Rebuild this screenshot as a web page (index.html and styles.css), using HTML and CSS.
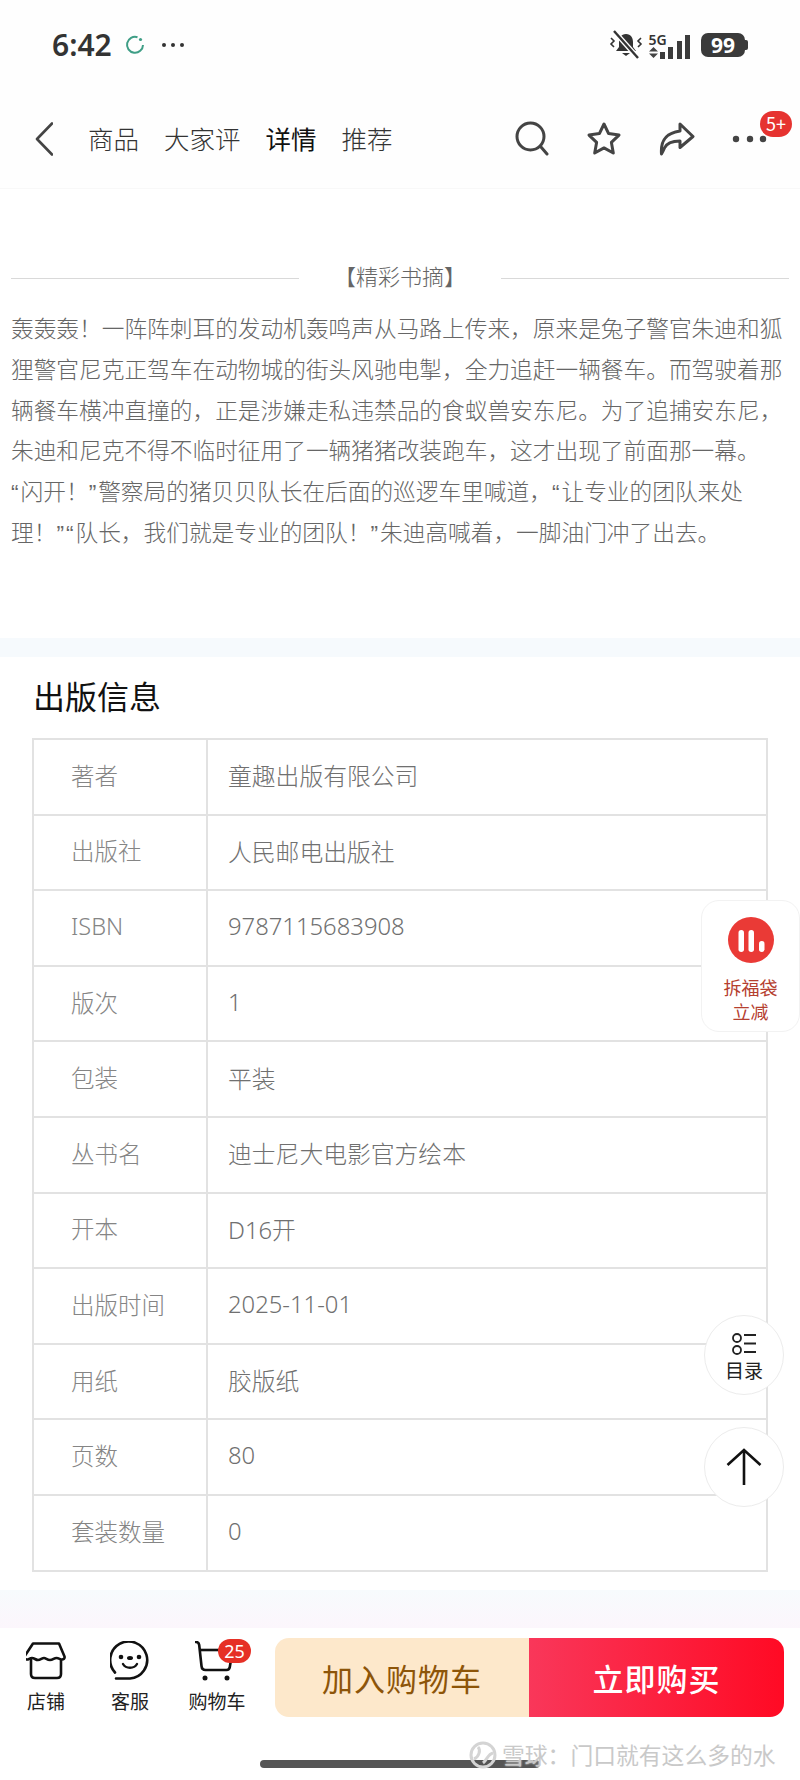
FILE: index.html
```html
<!DOCTYPE html>
<html lang="zh-CN">
<head>
    <meta charset="UTF-8">
    <title>出版信息</title>
    <link rel="stylesheet" href="styles.css">
</head>
<body>
    <div class="phone">
        <!-- Status bar -->
        <div class="status">
            <div class="status-left">
                <span class="time">6:42</span>
                <svg class="sync" width="20" height="20" viewBox="0 0 20 20"><path d="M12.5 2.2A8 8 0 1 0 18 10" fill="none" stroke="#3f9e86" stroke-width="2"/><circle cx="15.5" cy="4.5" r="1.6" fill="#3f9e86"/></svg>
                <svg class="more" width="24" height="6" viewBox="0 0 24 6"><circle cx="3" cy="3" r="2" fill="#333"/><circle cx="12" cy="3" r="2" fill="#333"/><circle cx="21" cy="3" r="2" fill="#333"/></svg>
            </div>
            <div class="status-right">
                <svg width="34" height="30" viewBox="0 0 34 30"><path d="M17 4c-5 0-7 4-7 8v5l-3 4h20l-3-4v-5c0-4-2-8-7-8z" fill="#333"/><path d="M13 23h8l-4 3z" fill="#333"/><path d="M5 1l24 27" stroke="#fff" stroke-width="5"/><path d="M5 1l24 27" stroke="#333" stroke-width="2.4"/><path d="M2 8l3 3-3 3 3 3M32 8l-3 3 3 3-3 3" fill="none" stroke="#333" stroke-width="1.6"/></svg>
                <div class="net">
                    <span class="net-label">5G</span>
                    <svg width="9" height="11" viewBox="0 0 9 11"><path d="M4.500 0L9 4.500H0zM4.500 11L0 6.500h9z" fill="#444"/></svg>
                </div>
                <div class="bars">
                    <i class="bar-1"></i><i class="bar-2"></i><i class="bar-3"></i><i class="bar-4"></i>
                </div>
                <div class="battery"><span>99</span></div>
            </div>
        </div>

        <!-- Top nav -->
        <nav class="topnav">
            <svg class="back" width="18" height="34" viewBox="0 0 18 34"><path d="M17 1.500L2 17l15 15.500" fill="none" stroke="#444" stroke-width="2.600" stroke-linecap="round" stroke-linejoin="round"/></svg>
            <div class="tabs">
                <a>商品</a>
                <a>大家评</a>
                <a class="active">详情</a>
                <a>推荐</a>
            </div>
            <div class="actions">
                <svg width="34" height="36" viewBox="0 0 34 36"><circle cx="15.500" cy="15.500" r="13.500" fill="none" stroke="#444" stroke-width="3"/><path d="M26 26l6 7" stroke="#444" stroke-width="3" stroke-linecap="round"/></svg>
                <svg width="36" height="36" viewBox="0 0 36 36"><path d="M18 3l4.600 9.600 10.400 1.500-7.600 7.300 1.900 10.600-9.300-5.100-9.300 5.100 1.900-10.600L3 14.100l10.400-1.500z" fill="none" stroke="#444" stroke-width="3" stroke-linejoin="round"/></svg>
                <svg width="36" height="36" viewBox="0 0 36 36"><path d="M21 3l13 12.500-13 11v-6.500c-8 0-13 1.500-15.500 7-1 2.300-2 4.500-3 6 -1-13 4-21 18.500-23z" fill="none" stroke="#444" stroke-width="3" stroke-linejoin="round"/></svg>
                <svg width="36" height="8" viewBox="0 0 36 8"><circle cx="4" cy="4" r="3.200" fill="#444"/><circle cx="18" cy="4" r="3.200" fill="#444"/><circle cx="31" cy="4" r="3.200" fill="#444"/></svg>
            </div>
            <span class="nav-badge">5+</span>
        </nav>

        <!-- Excerpt -->
        <section class="excerpt">
            <div class="excerpt-title"><span>【精彩书摘】</span></div>
            <p>轰轰轰！一阵阵刺耳的发动机轰鸣声从马路上传来，原来是兔子警官朱迪和狐<br>狸警官尼克正驾车在动物城的街头风驰电掣，全力追赶一辆餐车。而驾驶着那<br>辆餐车横冲直撞的，正是涉嫌走私违禁品的食蚁兽安东尼。为了追捕安东尼，<br>朱迪和尼克不得不临时征用了一辆猪猪改装跑车，这才出现了前面那一幕。<br><span class="q">“</span>闪开！<span class="q">”</span>警察局的猪贝贝队长在后面的巡逻车里喊道，<span class="q">“</span>让专业的团队来处<br>理！<span class="q">”“</span>队长，我们就是专业的团队！<span class="q">”</span>朱迪高喊着，一脚油门冲了出去。</p>
        </section>

        <div class="band"></div>

        <!-- Publication info -->
        <section class="pubinfo">
            <h2>出版信息</h2>
            <table class="info-table">
                <tr><th>著者</th><td>童趣出版有限公司</td></tr>
                <tr><th>出版社</th><td>人民邮电出版社</td></tr>
                <tr><th>ISBN</th><td>9787115683908</td></tr>
                <tr><th>版次</th><td>1</td></tr>
                <tr><th>包装</th><td>平装</td></tr>
                <tr><th>丛书名</th><td>迪士尼大电影官方绘本</td></tr>
                <tr><th>开本</th><td>D16开</td></tr>
                <tr><th>出版时间</th><td>2025-11-01</td></tr>
                <tr><th>用纸</th><td>胶版纸</td></tr>
                <tr><th>页数</th><td>80</td></tr>
                <tr><th>套装数量</th><td>0</td></tr>
            </table>
        </section>

        <div class="band-bottom"></div>

        <!-- Bottom bar -->
        <footer class="bottombar">
            <div class="tool tool-shop">
                <svg width="40" height="38" viewBox="0 0 40 38"><path d="M7 1.500h26l5.500 13c.5 2-1 3-2.500 3-2 0-3-1.500-5.500-1.500s-3.500 2-6.500 2-4-2-6-2-3.500 2-6 2-3.500-2-6-2-3 1.500-5 1.500-3-1-2.500-3z" fill="none" stroke="#111" stroke-width="2.600" stroke-linejoin="round"/><path d="M5 17v15c0 2.500 1.500 4 4 4h22c2.500 0 4-1.500 4-4V17" fill="none" stroke="#111" stroke-width="2.600"/></svg>
                <span>店铺</span>
            </div>
            <div class="tool tool-service">
                <svg width="40" height="38" viewBox="0 0 40 38"><path d="M5 30.500A18.500 18.500 0 1 1 20 36.500H6" fill="none" stroke="#111" stroke-width="2.600" stroke-linecap="round"/><circle cx="11" cy="15" r="2.300" fill="#111"/><circle cx="29" cy="15" r="2.300" fill="#111"/><ellipse cx="20" cy="16" rx="3" ry="2" fill="#111"/><path d="M13 22c3 5 11 5 14 0" fill="none" stroke="#111" stroke-width="2.400" stroke-linecap="round"/></svg>
                <span>客服</span>
            </div>
            <div class="tool tool-cart">
                <svg width="38" height="40" viewBox="0 0 38 40"><path d="M1 1c2 0 3 1 3.200 3l2.300 21c.3 3 1.500 4 4 4h21c2 0 3-1 3.300-3l1-6" fill="none" stroke="#111" stroke-width="2.600" stroke-linecap="round"/><path d="M5 9h24" stroke="#111" stroke-width="2.600"/><circle cx="10" cy="37" r="2.500" fill="#111"/><circle cx="32" cy="37" r="2.500" fill="#111"/></svg>
                <span>购物车</span>
                <b class="cart-badge">25</b>
            </div>
            <div class="buttons">
                <button class="btn-cart">加入购物车</button>
                <button class="btn-buy">立即购买</button>
            </div>
        </footer>

        <!-- Floating things over the page -->
        <div class="float-gift">
            <svg width="46" height="46" viewBox="0 0 46 46"><circle cx="23" cy="23" r="23" fill="#ea3a36"/><rect x="10.500" y="13" width="5.500" height="22" rx="2.700" fill="#fff"/><rect x="20.500" y="13" width="5.500" height="22" rx="2.700" fill="#fff"/><rect x="31" y="24" width="5.500" height="11" rx="2.700" fill="#fff"/></svg>
            <span>拆福袋<br>立减</span>
        </div>
        <div class="float-round float-toc">
            <svg width="26" height="22" viewBox="0 0 26 22"><circle cx="6" cy="5" r="4" fill="none" stroke="#222" stroke-width="1.800"/><circle cx="6" cy="17" r="4" fill="none" stroke="#222" stroke-width="1.800"/><path d="M13 2h12M13 10.500h12M13 19h12" stroke="#222" stroke-width="2"/></svg>
            <span>目录</span>
        </div>
        <div class="float-round float-top">
            <svg width="36" height="38" viewBox="0 0 36 38"><path d="M18 37V2M1.500 17L18 2l16.500 15" fill="none" stroke="#111" stroke-width="2.600"/></svg>
        </div>

        <div class="home-bar"></div>
        <div class="watermark">
            <svg width="28" height="28" viewBox="0 0 28 28"><circle cx="14" cy="14" r="12" fill="none" stroke="#d4d4d4" stroke-width="3"/><path d="M5 18C10 16 12 9 9 6M14 22c4-3 5-9 10-10" fill="none" stroke="#d4d4d4" stroke-width="3"/></svg>
            <span>雪球：门口就有这么多的水</span>
        </div>
    </div>
</body>
</html>
```
FILE: styles.css
```css
* {
    margin: 0;
    padding: 0;
    box-sizing: border-box;
}
body {
    background-color: #ffffff;
    font-family: "Noto Sans CJK SC", "Noto Sans", sans-serif;
}
.phone {
    position: relative;
    width: 800px;
    height: 1780px;
    overflow: hidden;
    display: flex;
    flex-direction: column;
}
/* Status bar */
.status {
    height: 90px;
    flex: none;
    background-color: #fefefe;
    display: flex;
    align-items: center;
    justify-content: space-between;
    padding: 0 55px 0 52px;
}
.status-left {
    display: flex;
    align-items: center;
}
.time {
    font-family: "Noto Sans", sans-serif;
    font-size: 30px;
    font-weight: 600;
    color: #333;
    line-height: 1;
}
.sync {
    margin-left: 13px;
}
.more {
    margin-left: 16px;
}
.status-right {
    display: flex;
    align-items: center;
}
.net {
    display: flex;
    flex-direction: column;
    align-items: flex-start;
    margin-left: 6px;
    width: 20px;
}
.net-label {
    font-family: "Noto Sans", sans-serif;
    font-size: 14px;
    font-weight: 600;
    line-height: 15px;
    color: #333;
}
.bars {
    display: flex;
    align-items: flex-end;
    gap: 3.500px;
    height: 24px;
    margin-top: 3px;
    margin-left: -9px;
}
.bars i {
    display: block;
    width: 5px;
    background-color: #3c3c3c;
}
.bar-1 { height: 7px; }
.bar-2 { height: 12px; }
.bar-3 { height: 18px; }
.bar-4 { height: 24px; }
.battery {
    position: relative;
    width: 44px;
    height: 24px;
    margin-left: 11px;
    border-radius: 7px;
    background-color: #3a3a3a;
    color: #fff;
    font-family: "Noto Sans", sans-serif;
    font-size: 21px;
    font-weight: 700;
    line-height: 24px;
    text-align: center;
}
.battery::after {
    content: "";
    position: absolute;
    right: -3px;
    top: 7px;
    width: 3px;
    height: 10px;
    border-radius: 0 2px 2px 0;
    background-color: #3a3a3a;
}
/* Top nav */
.topnav {
    position: relative;
    height: 99px;
    flex: none;
    background-color: #fefefe;
    border-bottom: 1px solid #f8f8f8;
    display: flex;
    align-items: center;
    padding: 0 33px 0 35px;
}
.back {
    flex: none;
}
.tabs {
    display: flex;
    gap: 25px;
    margin-left: 35px;
    padding-bottom: 4px;
    font-size: 25.500px;
    font-weight: 300;
    color: #333;
}
.tabs .active {
    color: #111;
    font-weight: 400;
}
.actions {
    margin-left: auto;
    margin-right: -1px;
    display: flex;
    align-items: center;
    gap: 37px;
}
.nav-badge {
    position: absolute;
    left: 760px;
    top: 21px;
    width: 32px;
    height: 26px;
    border-radius: 13px;
    background-color: #e63330;
    color: #fff;
    font-size: 18px;
    line-height: 25px;
    text-align: center;
}
/* Excerpt */
.excerpt {
    flex: none;
    height: 449px;
    padding: 71px 11px 0;
}
.excerpt-title {
    display: flex;
    align-items: center;
    gap: 35px;
    font-size: 22px;
    font-weight: 300;
    line-height: 30px;
    color: #666;
}
.excerpt-title::before,
.excerpt-title::after {
    content: "";
    flex: 1;
    height: 1px;
    margin-top: 6px;
    background-color: #d9d9d9;
}
/* narrow latin quotes come from Liberation, the rest falls through to CJK */
.excerpt p {
    margin-top: 19px;
    font-family: "Liberation Sans", "Noto Sans CJK SC", sans-serif;
    font-size: 22.700px;
    font-weight: 300;
    line-height: 40.800px;
    color: #666;
    white-space: nowrap;
}
.excerpt .q {
    letter-spacing: 2px;
}
.band {
    height: 19px;
    flex: none;
    background-color: #f6fafd;
}
/* Publication info */
.pubinfo {
    flex: none;
    height: 933px;
    padding: 0 32px;
}
.pubinfo h2 {
    font-size: 32px;
    font-weight: 400;
    color: #111;
    line-height: 44px;
    margin-top: 16px;
    margin-bottom: 21px;
    margin-left: 1px;
}
.info-table {
    width: 736px;
    border-collapse: collapse;
    table-layout: fixed;
    font-family: "Noto Sans", "Noto Sans CJK SC", sans-serif;
    font-size: 23.500px;
    font-weight: 300;
    color: #707070;
}
.info-table tr {
    height: 75.600px;
}
.info-table th,
.info-table td {
    border: 2px solid #e2e2e2;
    text-align: left;
    font-weight: 300;
    padding-bottom: 4px;
}
.info-table th {
    width: 174px;
    padding-left: 37px;
    color: #858585;
}
.info-table td {
    padding-left: 20px;
    font-size: 23.800px;
}
.band-bottom {
    height: 38px;
    flex: none;
    background: linear-gradient(180deg, #f7fbfd, #fcf6fc);
}
/* Bottom bar */
.bottombar {
    flex: 1;
    position: relative;
    display: flex;
    align-items: flex-start;
    padding-top: 10px;
    background-color: #ffffff;
}
.tool {
    position: relative;
    display: flex;
    flex-direction: column;
    align-items: center;
    width: 58px;
    font-size: 19px;
    line-height: 26px;
    color: #222;
}
.tool svg {
    height: 40px;
    margin-top: 3px;
    margin-bottom: 7px;
}
.tool-shop {
    margin-left: 17px;
}
.tool-service {
    margin-left: 26px;
}
.tool-cart {
    margin-left: 29px;
}
.tool-cart svg {
    margin-right: 7px;
}
.cart-badge {
    position: absolute;
    left: 30px;
    top: 1px;
    width: 33px;
    height: 24px;
    border-radius: 12px;
    background-color: #e63026;
    color: #fff;
    font-family: "Noto Sans", sans-serif;
    font-size: 18px;
    font-weight: 400;
    line-height: 24px;
    text-align: center;
}
.buttons {
    position: absolute;
    left: 275px;
    top: 10px;
    display: flex;
    width: 509px;
    height: 79px;
    border-radius: 14px;
    overflow: hidden;
}
.buttons button {
    border: none;
    font-family: inherit;
    font-size: 31px;
    letter-spacing: 1px;
}
.btn-cart {
    width: 254px;
    background-color: #fde8cb;
    color: #8d5509;
}
.btn-buy {
    width: 255px;
    background: linear-gradient(90deg, #f9375a, #ff0a24);
    color: #ffffff;
    font-weight: 500;
}
/* Floating */
.float-gift {
    position: absolute;
    left: 701px;
    top: 900px;
    width: 99px;
    height: 132px;
    background-color: #ffffff;
    border: 1px solid #f2f2f2;
    border-radius: 18px;
    display: flex;
    flex-direction: column;
    align-items: center;
    padding-top: 16px;
    font-size: 18px;
    line-height: 24px;
    color: #b5402f;
    text-align: center;
}
.float-gift span {
    margin-top: 12px;
}
.float-round {
    position: absolute;
    left: 704px;
    width: 80px;
    height: 80px;
    border: 1px solid #ececec;
    border-radius: 50%;
    background-color: #ffffff;
    display: flex;
    flex-direction: column;
    align-items: center;
    justify-content: center;
}
.float-toc {
    top: 1315px;
    padding-top: 4px;
    font-size: 19px;
    line-height: 24px;
    color: #222;
}
.float-toc svg {
    margin-bottom: 3px;
}
.float-top {
    top: 1427px;
}
.home-bar {
    position: absolute;
    left: 260px;
    top: 1760px;
    width: 280px;
    height: 8px;
    border-radius: 4px;
    background-color: #555;
}
.watermark {
    position: absolute;
    left: 469px;
    top: 1739px;
    display: flex;
    align-items: center;
    gap: 5px;
    font-size: 22.800px;
    line-height: 32px;
    color: #c9c9c9;
    text-shadow: 0 0 2px #fff;
    white-space: nowrap;
}
```
